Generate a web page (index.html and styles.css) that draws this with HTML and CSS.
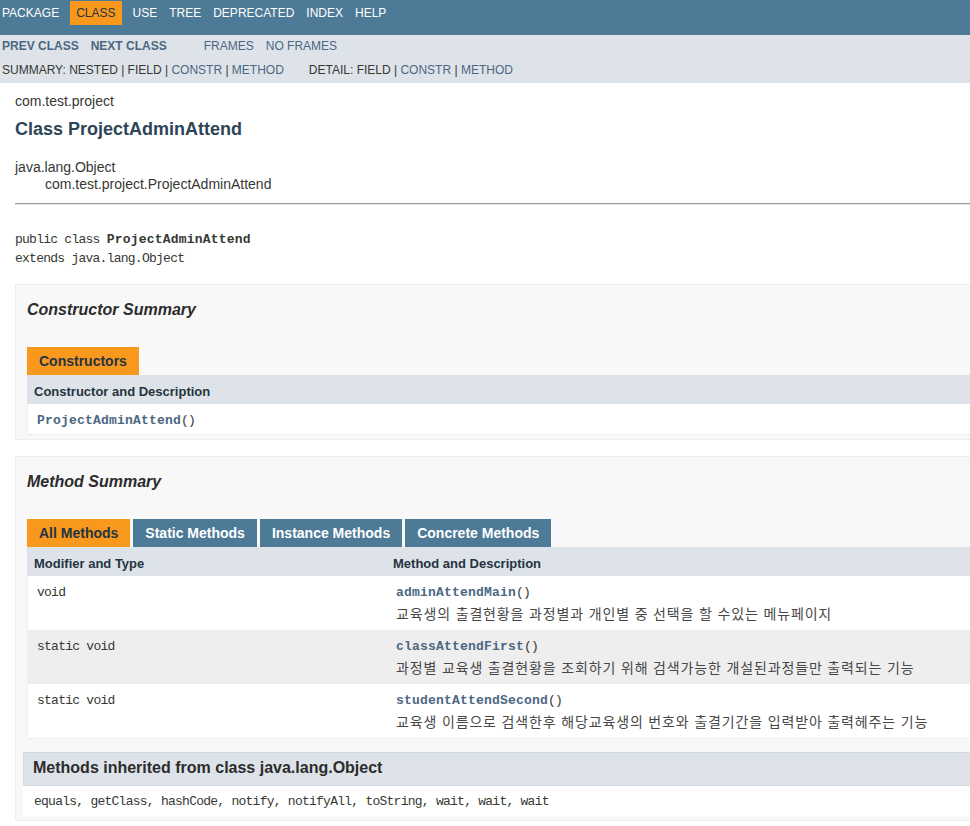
FILE: index.html
```html
<!DOCTYPE html>
<html lang="ko">
<head>
<meta charset="utf-8">
<title>ProjectAdminAttend</title>
<link rel="stylesheet" href="styles.css">
</head>
<body>
<div class="topNav">
  <ul class="navList">
    <li>PACKAGE</li>
    <li class="navBarCell1Rev">CLASS</li>
    <li>USE</li>
    <li>TREE</li>
    <li>DEPRECATED</li>
    <li>INDEX</li>
    <li>HELP</li>
  </ul>
</div>
<div class="subNav">
  <div class="subRow1">
    <ul class="navList group">
      <li><a class="strong">PREV CLASS</a></li>
      <li><a class="strong">NEXT CLASS</a></li>
    </ul>
    <ul class="navList group">
      <li><a>FRAMES</a></li>
      <li><a>NO FRAMES</a></li>
    </ul>
  </div>
  <div class="subRow2">
    <span class="group">SUMMARY: NESTED | FIELD | <a>CONSTR</a> | <a>METHOD</a></span>
    <span class="group">DETAIL: FIELD | <a>CONSTR</a> | <a>METHOD</a></span>
  </div>
</div>

<div class="header">
  <div class="subTitle">com.test.project</div>
  <h2 class="title">Class ProjectAdminAttend</h2>
</div>

<div class="contentContainer">
  <ul class="inheritance">
    <li>java.lang.Object</li>
    <li class="inh2">com.test.project.ProjectAdminAttend</li>
  </ul>
  <hr class="rule">
  <pre class="decl">public class <b class="typeName">ProjectAdminAttend</b>
extends java.lang.Object</pre>

  <section class="blockList">
    <h3 class="blockTitle">Constructor Summary</h3>
    <div class="tabs"><span class="tab active">Constructors</span></div>
    <div class="tableHead one"><div>Constructor and Description</div></div>
    <div class="rows">
      <div class="row one white">
        <div class="cell"><code><a class="memberName">ProjectAdminAttend</a>()</code></div>
      </div>
    </div>
  </section>

  <section class="blockList">
    <h3 class="blockTitle">Method Summary</h3>
    <div class="tabs">
      <span class="tab active">All Methods</span>
      <span class="tab">Static Methods</span>
      <span class="tab">Instance Methods</span>
      <span class="tab">Concrete Methods</span>
    </div>
    <div class="tableHead two"><div>Modifier and Type</div><div>Method and Description</div></div>
    <div class="rows">
      <div class="row two white">
        <div class="cell first"><code>void</code></div>
        <div class="cell"><code><a class="memberName">adminAttendMain</a>()</code>
          <div class="desc">교육생의 출결현황을 과정별과 개인별 중 선택을 할 수있는 메뉴페이지</div></div>
      </div>
      <div class="row two grey">
        <div class="cell first"><code>static void</code></div>
        <div class="cell"><code><a class="memberName">classAttendFirst</a>()</code>
          <div class="desc">과정별 교육생 출결현황을 조회하기 위해 검색가능한 개설된과정들만 출력되는 기능</div></div>
      </div>
      <div class="row two white">
        <div class="cell first"><code>static void</code></div>
        <div class="cell"><code><a class="memberName">studentAttendSecond</a>()</code>
          <div class="desc">교육생 이름으로 검색한후 해당교육생의 번호와 출결기간을 입력받아 출력헤주는 기능</div></div>
      </div>
    </div>
    <h3 class="inheritedTitle">Methods inherited from class java.lang.Object</h3>
    <div class="inheritedRow"><code>equals, getClass, hashCode, notify, notifyAll, toString, wait, wait, wait</code></div>
  </section>
</div>
</body>
</html>
```
FILE: styles.css
```css
html {
  overflow: hidden;
}

body {
  margin: 0;
  width: 1150px;
  font-family: "Liberation Sans", Arial, "Noto Sans CJK KR", sans-serif;
  font-size: 14px;
  color: #353833;
  background: #ffffff;
}

a {
  color: #4A6782;
  text-decoration: none;
}

code, pre {
  font-family: "Liberation Mono", "DejaVu Sans Mono", monospace;
  font-size: 13px;
  letter-spacing: -0.75px;
}

/* top navigation */
.topNav {
  background: #4D7A97;
  height: 35px;
  color: #ffffff;
  font-size: 12px;
}

.navList {
  list-style: none;
  margin: 0;
  padding: 0;
  display: flex;
}

.topNav .navList {
  margin-left: -4px;
  padding-top: 1px;
}

.navList li {
  padding: 5px 6px;
  line-height: 14px;
}

.navBarCell1Rev {
  background: #F8981D;
  color: #253441;
  margin: 0 5px;
}

/* sub navigation */
.subNav {
  background: #dee3e9;
  height: 48px;
  font-size: 12px;
}

.subRow1 {
  display: flex;
  margin-left: -4px;
}

.subRow1 li {
  padding: 4px 6px 5px;
}

.subRow1 .group {
  margin-right: 25px;
}

.strong {
  font-weight: bold;
}

.subRow2 {
  display: flex;
  margin-left: -4px;
  padding: 5px 0 0 6px;
  line-height: 14px;
}

.subRow2 .group {
  margin-right: 25px;
  white-space: pre;
}

/* header */
.header {
  padding: 10px 15px 0;
}

.subTitle {
  line-height: 17px;
}

.title {
  margin: 8px 0 0;
  font-size: 18px;
  line-height: 22px;
  font-weight: bold;
  color: #2c4557;
}

/* content */
.contentContainer {
  padding: 0 15px;
}

.inheritance {
  list-style: none;
  margin: 19px 0 0;
  padding: 0;
}

.inheritance li {
  line-height: 17px;
}

.inh2 {
  padding-left: 30px;
}

.rule {
  margin: 10px 0 0;
  height: 0;
  border: 0;
  border-top: 1px solid #9a9a9a;
  border-bottom: 1px solid #e6e6e6;
}

.decl {
  margin: 25px 0 0;
  line-height: 19px;
  color: #353833;
}

.typeName {
  font-weight: bold;
  letter-spacing: 0.2px;
  color: #353833;
}

.blockList {
  margin-top: 16px;
  background: #f8f8f8;
  border: 1px solid #ededed;
  padding: 0 11px 4px;
}

.blockTitle {
  margin: 15px 0 0;
  font-size: 16px;
  line-height: 20px;
  font-weight: bold;
  font-style: italic;
  color: #2c2c2c;
}

.tabs {
  display: flex;
  gap: 3px;
  margin-top: 27px;
}

.tab {
  height: 28px;
  line-height: 28px;
  padding: 0 12px;
  font-weight: bold;
  font-size: 14px;
  background: #4D7A97;
  color: #ffffff;
}

.tab.active {
  background: #F8981D;
  color: #253441;
}

.tableHead {
  display: grid;
  background: #dee3e9;
  font-size: 13px;
  font-weight: bold;
  color: #253441;
}

.tableHead > div {
  padding: 8px 3px 3px 7px;
  line-height: 18px;
}

.tableHead.one,
.row.one {
  grid-template-columns: 1fr;
}

.tableHead.two {
  grid-template-columns: 359px 1fr;
}

.rows {
  border: 1px solid #eeeeee;
  border-top: 0;
}

.row {
  display: grid;
}

.row.two {
  grid-template-columns: 358px 1fr;
}

.row.white {
  background: #ffffff;
}

.row.grey {
  background: #eeeeef;
}

.cell {
  padding: 8px 3px 5px 10px;
}

.cell code,
.inheritedRow code {
  display: block;
  line-height: 17px;
}

.cell.first,
.row.one .cell {
  padding-left: 9px;
}

.memberName {
  font-weight: bold;
  letter-spacing: 0.2px;
}

.desc {
  margin-top: 3px;
  line-height: 21px;
  font-size: 14px;
  letter-spacing: 0.85px;
  color: #474747;
}

.inheritedTitle {
  margin: 13px 0 0 -4px;
  background: #dee3e9;
  border: 1px solid #d0d9e0;
  padding: 6px 5px 8px 9px;
  font-size: 16px;
  line-height: 18px;
  font-weight: bold;
  color: #2c2c2c;
}

.inheritedRow {
  margin-left: -4px;
  background: #ffffff;
  padding: 7px 11px 6px;
}
```
